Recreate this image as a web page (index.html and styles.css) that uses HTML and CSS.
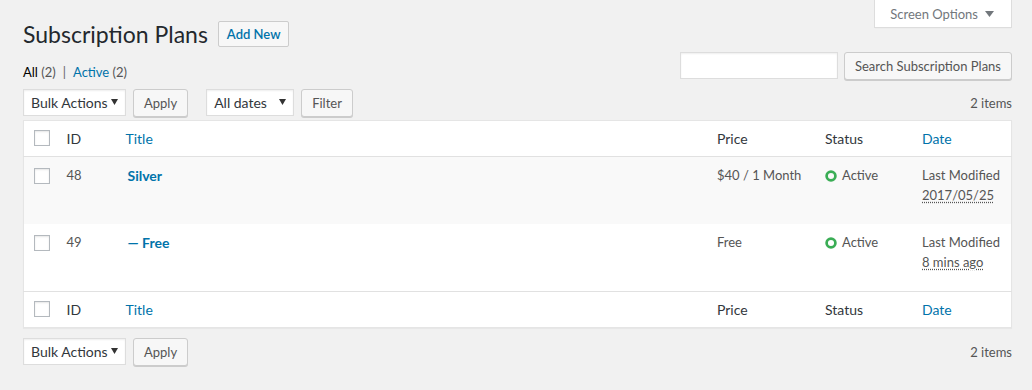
FILE: index.html
```html
<!DOCTYPE html>
<html lang="en">
<head>
    <meta charset="UTF-8">
    <meta name="viewport" content="width=device-width, initial-scale=1.0">
    <title>Subscription Plans</title>
    <link rel="stylesheet" href="styles.css">
</head>
<body>

    <!-- Screen options tab -->
    <div class="screen-options">
        <span>Screen Options</span>
        <svg width="9" height="6" viewBox="0 0 9 6"><path d="M0 0h9L4.5 6z" fill="#72777c"/></svg>
    </div>

    <div class="heading">
        <h1>Subscription Plans</h1>
        <a class="page-title-action" href="#">Add New</a>
    </div>

    <div class="filters">
        <ul class="subsubsub">
            <li class="current">All <span class="count">(2)</span></li>
            <li class="sep">|</li>
            <li><a href="#">Active</a> <span class="count">(2)</span></li>
        </ul>
        <div class="search-box">
            <input type="search" class="search-input">
            <button class="button">Search Subscription Plans</button>
        </div>
    </div>

    <div class="tablenav">
        <div class="actions">
            <div class="select bulk">Bulk Actions
                <svg width="7" height="6" viewBox="0 0 7 6"><path d="M0 0h7L3.5 6z" fill="#333"/></svg>
            </div>
            <button class="button">Apply</button>
        </div>
        <div class="actions">
            <div class="select dates">All dates
                <svg width="7" height="6" viewBox="0 0 7 6"><path d="M0 0h7L3.5 6z" fill="#333"/></svg>
            </div>
            <button class="button">Filter</button>
        </div>
        <div class="displaying-num">2 items</div>
    </div>

    <!-- List table -->
    <table class="list-table">
        <thead>
            <tr>
                <th class="col-cb"><span class="checkbox"></span></th>
                <th class="col-id">ID</th>
                <th class="col-title"><a href="#">Title</a></th>
                <th class="col-price">Price</th>
                <th class="col-status">Status</th>
                <th class="col-date"><a href="#">Date</a></th>
            </tr>
        </thead>
        <tbody>
            <tr class="alt">
                <td class="col-cb"><span class="checkbox"></span></td>
                <td>48</td>
                <td><a class="row-title" href="#">Silver</a></td>
                <td>$40 / 1 Month</td>
                <td><span class="status"><svg width="12" height="12" viewBox="0 0 12 12"><circle cx="6" cy="6" r="4.4" fill="none" stroke="#3aad55" stroke-width="2.7"/></svg>Active</span></td>
                <td>Last Modified<br><abbr>2017/05/25</abbr></td>
            </tr>
            <tr>
                <td class="col-cb"><span class="checkbox"></span></td>
                <td>49</td>
                <td><a class="row-title" href="#">— Free</a></td>
                <td>Free</td>
                <td><span class="status"><svg width="12" height="12" viewBox="0 0 12 12"><circle cx="6" cy="6" r="4.4" fill="none" stroke="#3aad55" stroke-width="2.7"/></svg>Active</span></td>
                <td>Last Modified<br><abbr>8 mins ago</abbr></td>
            </tr>
        </tbody>
        <tfoot>
            <tr>
                <th class="col-cb"><span class="checkbox"></span></th>
                <th>ID</th>
                <th><a href="#">Title</a></th>
                <th>Price</th>
                <th>Status</th>
                <th><a href="#">Date</a></th>
            </tr>
        </tfoot>
    </table>

    <div class="tablenav bottom">
        <div class="actions">
            <div class="select bulk">Bulk Actions
                <svg width="7" height="6" viewBox="0 0 7 6"><path d="M0 0h7L3.5 6z" fill="#333"/></svg>
            </div>
            <button class="button">Apply</button>
        </div>
        <div class="displaying-num">2 items</div>
    </div>

</body>
</html>
```

FILE: styles.css
```css
body {
    font-family: Lato, "Segoe UI", "Liberation Sans", sans-serif;
    font-size: 13px;
    color: #444;
    margin: 0;
    padding: 0 20px 0 23px;
    background-color: #f1f1f1;
}
a {
    color: #0073aa;
    text-decoration: none;
}
.screen-options {
    float: right;
    display: flex;
    align-items: center;
    gap: 7px;
    height: 27px;
    padding: 0 17px 0 15px;
    background: #fff;
    border: 1px solid #ddd;
    border-top: none;
    box-shadow: 0 1px 1px -1px rgba(0,0,0,.1);
    color: #72777c;
    font-size: 13px;
}
.heading {
    display: flex;
    align-items: center;
    gap: 10px;
    padding-top: 19px;
}
h1 {
    margin: 0;
    font-size: 23px;
    font-weight: 400;
    line-height: 30px;
    color: #23282d;
}
.page-title-action {
    display: inline-block;
    height: 24px;
    line-height: 24px;
    padding: 0 8px;
    border: 1px solid #ccc;
    border-radius: 2px;
    background: #f7f7f7;
    font-weight: 600;
    font-size: 13px;
}
.filters {
    clear: both;
    display: flex;
    justify-content: space-between;
    align-items: flex-start;
    height: 28px;
    margin-top: 3px;
}
.subsubsub {
    list-style: none;
    margin: 0;
    padding: 12px 0 0;
    display: flex;
    gap: 5px;
    line-height: 16px;
    color: #666;
}
.subsubsub .current {
    color: #000;
}
.subsubsub .count {
    color: #555;
}
.subsubsub .sep {
    color: #666;
    padding: 0 2px;
}
.search-box {
    display: flex;
    gap: 6px;
}
.search-input {
    width: 158px;
    height: 27px;
    box-sizing: border-box;
    border: 1px solid #ddd;
    box-shadow: inset 0 1px 2px rgba(0,0,0,.07);
    margin: 0;
}
.button {
    height: 28px;
    box-sizing: border-box;
    padding: 0 10px 1px;
    border: 1px solid #ccc;
    border-radius: 3px;
    background: #f7f7f7;
    box-shadow: 0 1px 0 #ccc;
    color: #555;
    font-family: inherit;
    font-size: 13px;
}
.tablenav {
    display: flex;
    align-items: center;
    gap: 18px;
    height: 28px;
    margin: 9px 0 3px;
}
.tablenav.bottom {
    margin-top: 10px;
}
.actions {
    display: flex;
    gap: 7px;
}
.select {
    display: flex;
    align-items: center;
    justify-content: space-between;
    height: 27px;
    box-sizing: border-box;
    padding: 0 7px 1px 7px;
    background: #fff;
    border: 1px solid #ddd;
    box-shadow: inset 0 1px 2px rgba(0,0,0,.07);
    color: #32373c;
    font-size: 14px;
}
.select.bulk {
    width: 103px;
}
.select.dates {
    width: 88px;
}
.displaying-num {
    margin-left: auto;
    color: #555;
}
.list-table {
    width: 100%;
    table-layout: fixed;
    border-collapse: collapse;
    background: #fff;
    border: 1px solid #e5e5e5;
    box-shadow: 0 1px 1px rgba(0,0,0,.04);
}
.list-table th {
    text-align: left;
    font-weight: 400;
    font-size: 14px;
    line-height: 19px;
    padding: 8px 10px;
    color: #32373c;
    height: 19px;
    vertical-align: top;
}
.list-table thead th {
    border-bottom: 1px solid #e1e1e1;
}
.list-table tfoot th {
    border-top: 1px solid #e1e1e1;
}
.list-table td {
    padding: 9px 10px 8px;
    line-height: 19.5px;
    height: 50px;
    vertical-align: top;
    color: #555;
}
.list-table tr.alt td {
    background: #f9f9f9;
}
.list-table .col-cb {
    width: 33px;
    box-sizing: border-box;
    padding: 9px 0 0 10px;
}
.list-table td.col-cb {
    padding-top: 11px;
}
.col-id {
    width: 39px;
}
.col-price {
    width: 88px;
}
.col-status {
    width: 77px;
}
.col-date {
    width: 79px;
}
.checkbox {
    display: block;
    width: 16px;
    height: 16px;
    box-sizing: border-box;
    border: 1px solid #b4b9be;
    background: #fff;
    box-shadow: inset 0 1px 2px rgba(0,0,0,.1);
}
.row-title {
    font-weight: 700;
    font-size: 14px;
    padding-left: 2px;
}
.status {
    display: inline-flex;
    align-items: center;
    gap: 5px;
}
abbr {
    text-decoration: underline dotted;
    text-underline-offset: 2px;
}
```
